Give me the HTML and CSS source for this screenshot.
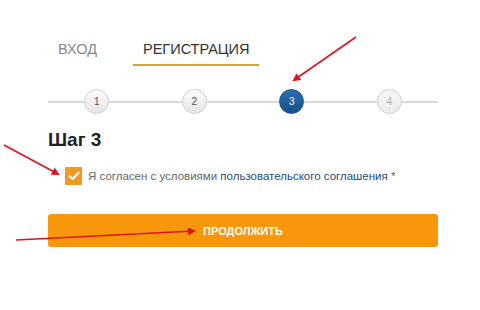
FILE: index.html
```html
<!DOCTYPE html>
<html lang="ru">
<head>
    <meta charset="UTF-8">
    <title>Регистрация</title>
    <link rel="stylesheet" href="styles.css">
</head>
<body>
    <div class="container">
        <!-- Tabs -->
        <div class="tabs">
            <div class="tab">ВХОД</div>
            <div class="tab active">РЕГИСТРАЦИЯ</div>
        </div>

        <!-- Steps -->
        <div class="steps">
            <div class="step"><span class="step-num">1</span></div>
            <div class="step"><span class="step-num">2</span></div>
            <div class="step"><span class="step-num current">3</span></div>
            <div class="step"><span class="step-num future">4</span></div>
        </div>

        <h2 class="step-title">Шаг 3</h2>

        <label class="agree">
            <span class="checkbox">
                <svg width="12" height="10" viewBox="0 0 12 10"><path d="M1.5 5.2 L4.6 8 L10.5 1.8" fill="none" stroke="#fff" stroke-width="2.2" stroke-linecap="round" stroke-linejoin="round"/></svg>
            </span>
            <span class="agree-text">Я согласен с условиями <a href="#">пользовательского соглашения</a> *</span>
        </label>

        <button class="continue-btn">ПРОДОЛЖИТЬ</button>
    </div>

    <!-- Red annotation arrows -->
    <svg class="arrows" width="480" height="310" viewBox="0 0 480 310">
        <defs>
            <marker id="head" markerWidth="8" markerHeight="8" refX="6" refY="4" orient="auto" markerUnits="userSpaceOnUse">
                <path d="M0 0 L8 4 L0 8 Z" fill="#e0141e"/>
            </marker>
        </defs>
        <line x1="356" y1="37" x2="294" y2="80" stroke="#e0141e" stroke-width="1.6" marker-end="url(#head)"/>
        <line x1="4" y1="145" x2="58" y2="174" stroke="#e0141e" stroke-width="1.6" marker-end="url(#head)"/>
        <line x1="16" y1="240" x2="194" y2="231" stroke="#e0141e" stroke-width="1.6" marker-end="url(#head)"/>
    </svg>
</body>
</html>
```

FILE: styles.css
```css
* {
    margin: 0;
    padding: 0;
    box-sizing: border-box;
}

body {
    font-family: "Liberation Sans", Arial, sans-serif;
    background-color: #fff;
    width: 480px;
    height: 310px;
    overflow: hidden;
}

.container {
    width: 390px;
    margin-left: 48px;
    padding-top: 41px;
    display: flex;
    flex-direction: column;
}

/* Tabs */
.tabs {
    display: flex;
    gap: 26px;
}

.tab {
    padding: 0 10px 6px;
    font-size: 14.5px;
    line-height: 17px;
    color: #8a8a8a;
    border-bottom: 2px solid transparent;
}

.tab.active {
    color: #333;
    border-bottom-color: #cfa53c;
}

/* Steps */
.steps {
    display: flex;
    margin-top: 23px;
    height: 26px;
    background: linear-gradient(#d9d9d9, #d9d9d9) 0 12px / 100% 2px no-repeat;
}

.step {
    flex: 1;
    display: flex;
    justify-content: center;
}

.step-num {
    width: 25px;
    height: 25px;
    border-radius: 50%;
    border: 1px solid #cfcfcf;
    background: linear-gradient(#fafafa, #e6e6e6);
    color: #555;
    font-size: 10px;
    display: flex;
    align-items: center;
    justify-content: center;
}

.step-num.future {
    color: #aaa;
    background: linear-gradient(#f6f6f6, #ececec);
}

.step-num.current {
    border-color: #1b5590;
    background: linear-gradient(#2a6db0, #175089);
    color: #fff;
}

.step-title {
    margin-top: 14px;
    font-size: 19px;
    line-height: 22px;
    font-weight: bold;
    color: #222;
}

/* Agreement */
.agree {
    display: flex;
    align-items: center;
    gap: 6px;
    margin-top: 16px;
    margin-left: 17px;
}

.checkbox {
    width: 17px;
    height: 18px;
    background-color: #f29a1f;
    border-radius: 1px;
    display: flex;
    align-items: center;
    justify-content: center;
}

.agree-text {
    font-size: 11.5px;
    color: #666;
}

.agree-text a {
    color: #2b4d70;
    text-decoration: none;
}

/* Continue button */
.continue-btn {
    margin-top: 29px;
    height: 33px;
    width: 100%;
    border: none;
    border-radius: 3px;
    background-color: #f7970b;
    color: #fff;
    font-family: "Liberation Sans", Arial, sans-serif;
    font-weight: bold;
    font-size: 11px;
    cursor: pointer;
}

.arrows {
    position: absolute;
    top: 0;
    left: 0;
    pointer-events: none;
}
```
